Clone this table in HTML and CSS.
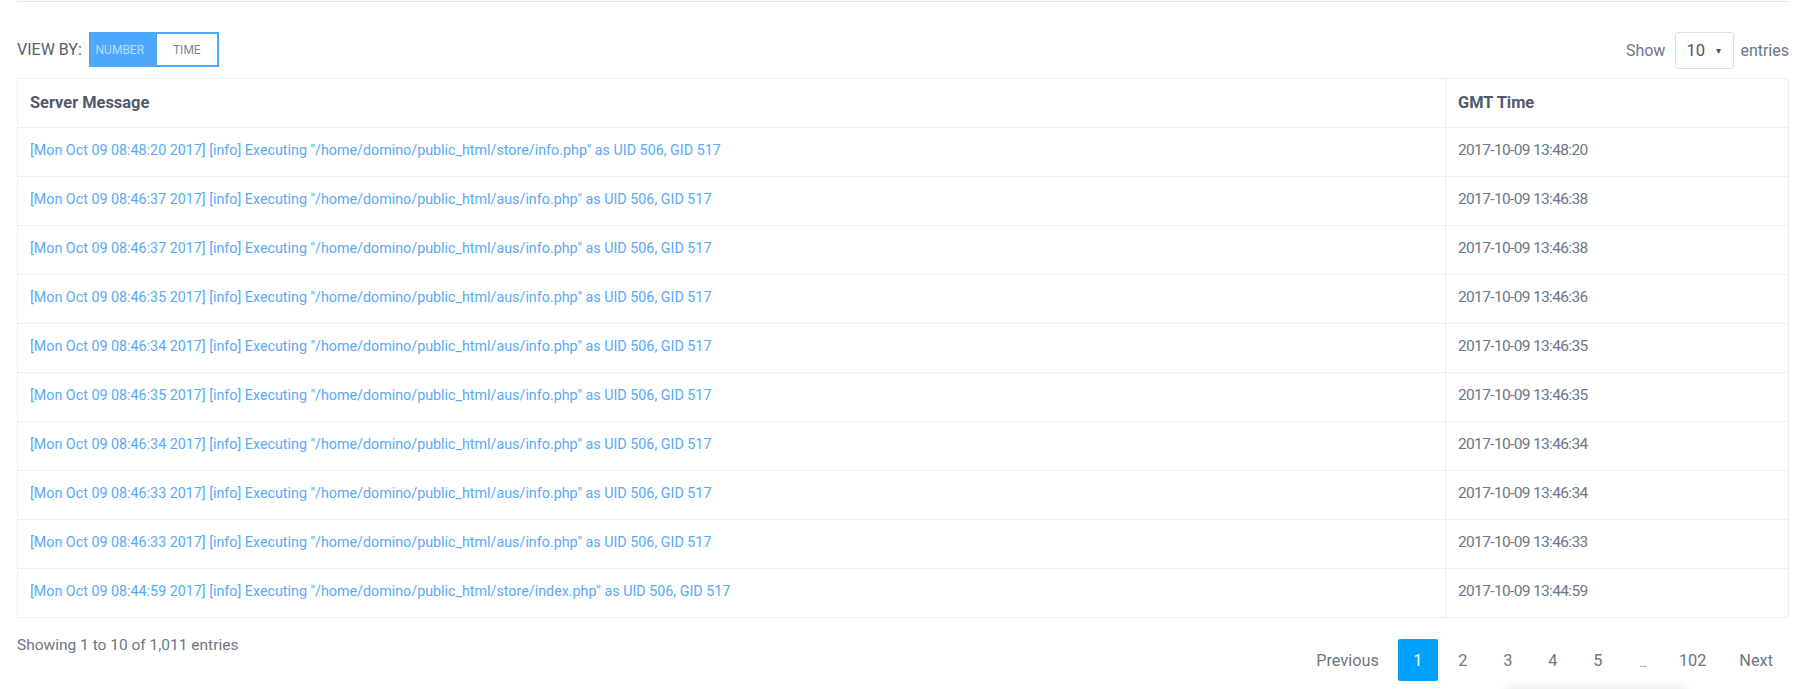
FILE: index.html
```html
<!DOCTYPE html>
<html lang="en">
<head>
<meta charset="utf-8">
<title>Server Messages</title>
<link rel="stylesheet" href="styles.css">
</head>
<body>
<div class="page">
  <div class="divider"></div>
  <div class="toolbar">
    <div class="viewby">
      <span class="viewby-label">VIEW BY:</span>
      <div class="toggle">
        <span class="toggle-opt is-active">NUMBER</span>
        <span class="toggle-opt">TIME</span>
      </div>
    </div>
    <div class="length">
      <span>Show</span>
      <div class="select"><span>10</span><span class="caret">&#9662;</span></div>
      <span>entries</span>
    </div>
  </div>
  <table class="log">
    <thead>
      <tr><th class="col-msg">Server Message</th><th class="col-time">GMT Time</th></tr>
    </thead>
    <tbody>
      <tr><td class="msg">[Mon Oct 09 08:48:20 2017] [info] Executing "/home/domino/public_html/store/info.php" as UID 506, GID 517</td><td class="time">2017-10-09 13:48:20</td></tr>
      <tr><td class="msg">[Mon Oct 09 08:46:37 2017] [info] Executing "/home/domino/public_html/aus/info.php" as UID 506, GID 517</td><td class="time">2017-10-09 13:46:38</td></tr>
      <tr><td class="msg">[Mon Oct 09 08:46:37 2017] [info] Executing "/home/domino/public_html/aus/info.php" as UID 506, GID 517</td><td class="time">2017-10-09 13:46:38</td></tr>
      <tr><td class="msg">[Mon Oct 09 08:46:35 2017] [info] Executing "/home/domino/public_html/aus/info.php" as UID 506, GID 517</td><td class="time">2017-10-09 13:46:36</td></tr>
      <tr><td class="msg">[Mon Oct 09 08:46:34 2017] [info] Executing "/home/domino/public_html/aus/info.php" as UID 506, GID 517</td><td class="time">2017-10-09 13:46:35</td></tr>
      <tr><td class="msg">[Mon Oct 09 08:46:35 2017] [info] Executing "/home/domino/public_html/aus/info.php" as UID 506, GID 517</td><td class="time">2017-10-09 13:46:35</td></tr>
      <tr><td class="msg">[Mon Oct 09 08:46:34 2017] [info] Executing "/home/domino/public_html/aus/info.php" as UID 506, GID 517</td><td class="time">2017-10-09 13:46:34</td></tr>
      <tr><td class="msg">[Mon Oct 09 08:46:33 2017] [info] Executing "/home/domino/public_html/aus/info.php" as UID 506, GID 517</td><td class="time">2017-10-09 13:46:34</td></tr>
      <tr><td class="msg">[Mon Oct 09 08:46:33 2017] [info] Executing "/home/domino/public_html/aus/info.php" as UID 506, GID 517</td><td class="time">2017-10-09 13:46:33</td></tr>
      <tr><td class="msg">[Mon Oct 09 08:44:59 2017] [info] Executing "/home/domino/public_html/store/index.php" as UID 506, GID 517</td><td class="time">2017-10-09 13:44:59</td></tr>
    </tbody>
  </table>
  <div class="footer">
    <div class="info">Showing 1 to 10 of 1,011 entries</div>
    <div class="pager">
      <span class="pg pg-text">Previous</span>
      <span class="pg is-current">1</span>
      <span class="pg">2</span>
      <span class="pg">3</span>
      <span class="pg">4</span>
      <span class="pg">5</span>
      <span class="pg pg-ellipsis">…</span>
      <span class="pg">102</span>
      <span class="pg pg-text pg-next">Next</span>
    </div>
  </div>
  <div class="floating-shadow"></div>
</div>
</body>
</html>
```
FILE: styles.css
```css
html, body {
  margin: 0;
  padding: 0;
  background: #ffffff;
  overflow: hidden;
}
body {
  font-family: Roboto, "Liberation Sans", sans-serif;
  color: #6b7785;
}
.page {
  position: relative;
  padding: 1px 14px 0 17px;
  height: 688px;
}
.divider {
  border-top: 1px solid #e6e8ea;
}
.toolbar {
  display: flex;
  justify-content: space-between;
  align-items: center;
  margin-top: 30px;
  height: 37px;
}
.viewby {
  display: flex;
  align-items: center;
  gap: 7px;
  margin-top: -2px;
}
.viewby-label {
  font-size: 16px;
  color: #56606e;
}
.toggle {
  display: flex;
  width: 130px;
  height: 35px;
  box-sizing: border-box;
  border: 2px solid #4da8fc;
}
.toggle-opt {
  display: flex;
  align-items: center;
  justify-content: center;
  font-size: 12px;
  color: #857f90;
  flex: 1 1 0;
}
.toggle-opt.is-active {
  background: #4da8fc;
  color: #b9dbfb;
  flex: 0 0 66px;
  padding-right: 8px;
  box-sizing: border-box;
}
.length {
  display: flex;
  align-items: center;
  font-size: 16px;
  color: #6b7785;
}
.select {
  display: flex;
  align-items: center;
  justify-content: space-between;
  box-sizing: border-box;
  width: 59px;
  height: 37px;
  margin: 0 6px 0 10px;
  padding: 0 12px 0 10px;
  border: 1px solid #dcdfe3;
  border-radius: 3px;
  font-size: 16.5px;
  color: #4a5564;
}
.caret {
  font-size: 10px;
  color: #4a5564;
}
.log {
  width: 100%;
  margin-top: 9px;
  border-collapse: collapse;
  border: 1px solid #eceef0;
}
.log th, .log td {
  padding: 13px 12px 17px;
  line-height: 18px;
  border: 1px solid #eceef0;
  text-align: left;
  vertical-align: top;
}
.log th {
  padding: 15px 12px;
  font-size: 16.4px;
  font-weight: 700;
  color: #4f5b6b;
}
.col-time {
  width: 318px;
}
.msg {
  font-size: 14.3px;
  color: #5aa9f8;
}
.time {
  font-size: 15.5px;
  letter-spacing: -0.65px;
  color: #6b7785;
}
.footer {
  display: flex;
  justify-content: space-between;
  align-items: flex-start;
  margin-top: 20px;
}
.info {
  font-size: 15.5px;
  color: #6b7785;
  margin-top: -1px;
  line-height: 16px;
}
.pager {
  display: flex;
  gap: 5px;
  margin-top: 1px;
  margin-right: 2px;
}
.pg {
  display: flex;
  align-items: center;
  justify-content: center;
  box-sizing: border-box;
  min-width: 40px;
  height: 42px;
  padding: 0 11px;
  border-radius: 2px;
  font-size: 16.3px;
  color: #6b7785;
}
.pg-text {
  padding: 0 14px;
}
.pg-next {
  margin-left: 3px;
}
.pg.is-current {
  background: #00a2ff;
  color: #ffffff;
}
.pg-ellipsis {
  font-size: 11px;
  padding-top: 6px;
}
.floating-shadow {
  position: absolute;
  left: 1507px;
  top: 689px;
  width: 178px;
  height: 40px;
  background: #fff;
  box-shadow: 0 0 10px rgba(0, 0, 0, 0.12);
}
```
